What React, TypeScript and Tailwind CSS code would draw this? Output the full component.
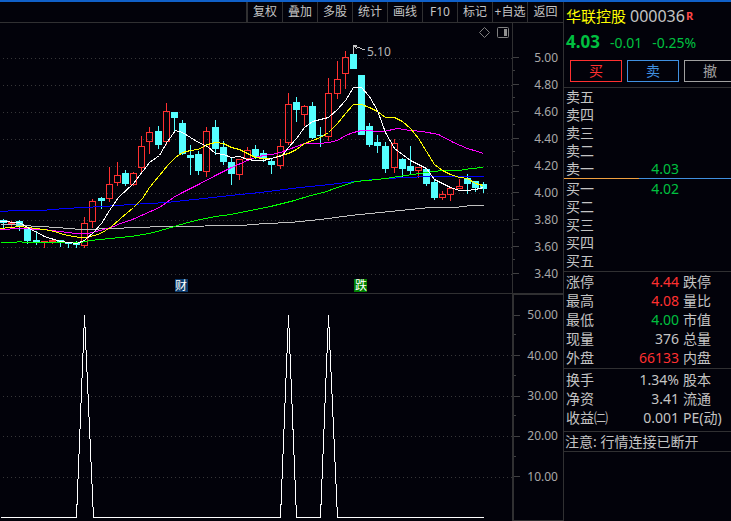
import React from "react";

type Candle = [up: 0 | 1, high: number, top: number, bottom: number, low: number];

const CANDLES: Candle[] = [
  [0, 219, 220, 223, 228], [1, 221, 222, 224, 227], [0, 220, 221, 226, 231], [0, 228, 229, 241, 244],
  [0, 231, 240, 242, 245], [1, 241, 241, 243, 248], [1, 238, 240, 242, 244], [0, 240, 240, 242, 247],
  [0, 242, 242, 244, 248], [0, 241, 243, 245, 248], [1, 217, 223, 246, 248], [1, 199, 201, 222, 228],
  [0, 197, 198, 201, 209], [1, 167, 184, 199, 202], [1, 162, 175, 183, 186], [0, 170, 173, 184, 186],
  [1, 172, 173, 185, 186], [1, 136, 146, 168, 172], [1, 127, 132, 142, 154], [0, 126, 131, 145, 149],
  [1, 103, 111, 142, 145], [0, 112, 112, 118, 131], [0, 120, 123, 154, 155], [0, 145, 155, 158, 175],
  [0, 151, 154, 171, 175], [1, 127, 131, 172, 177], [0, 120, 127, 149, 155], [0, 141, 147, 162, 165],
  [0, 158, 162, 174, 185], [1, 159, 159, 175, 180], [1, 147, 150, 159, 160], [0, 145, 149, 157, 159],
  [0, 150, 153, 159, 162], [0, 158, 161, 165, 174], [1, 139, 146, 166, 169], [1, 93, 104, 143, 145],
  [0, 97, 102, 110, 122], [1, 105, 106, 115, 126], [0, 102, 106, 138, 139], [0, 127, 135, 136, 147],
  [1, 78, 93, 137, 141], [1, 61, 79, 94, 99], [1, 51, 57, 74, 89], [0, 45, 54, 69, 69],
  [0, 75, 75, 135, 135], [0, 123, 126, 145, 147], [0, 135, 142, 146, 153], [0, 142, 146, 169, 173],
  [1, 139, 143, 168, 173], [0, 158, 159, 169, 177], [0, 146, 166, 171, 174], [1, 167, 167, 171, 178],
  [0, 169, 169, 184, 186], [0, 179, 182, 198, 200], [1, 191, 194, 198, 200], [1, 187, 188, 195, 201],
  [1, 179, 186, 189, 189], [0, 174, 178, 184, 194], [0, 181, 181, 188, 192], [0, 182, 184, 189, 193],
];

const AVERAGES = [
  {
    color: "#c0c0c0",
    points:
      "0,224 14,224 20,225 40,226 57,227 80,229 118,228 130,227 170,226 240,225 265,223 290,222 320,219 350,215 380,212 400,210 430,207 455,207 470,205 483,205",
  },
  {
    color: "#0000ff",
    points:
      "0,211 15,210 40,210 65,208 82,207 103,206 130,204 167,202 175,201 203,198 230,195 260,192 300,187 320,185 355,181 373,179 403,177 430,176 483,176",
  },
  {
    color: "#00ff00",
    points:
      "0,242 15,242 18,241 25,242 80,242 90,240 110,238 130,236 149,233 160,230 174,226 187,222 200,219 215,216 230,214 250,210 270,206 294,200 310,195 323,192 337,187 355,181 367,180 385,178 405,175 426,172 442,170 459,170 470,168 483,167",
  },
  {
    color: "#ff00ff",
    points:
      "0,229 19,228 43,229 60,231 75,233 87,233 100,230 113,226 120,223 132,219 159,207 173,197 182,192 198,184 215,175 231,167 247,160 255,157 263,155 271,154 280,152 296,146 304,143 320,143 328,142 337,140 345,135 353,132 361,130 383,131 397,128 410,130 422,131 438,134 453,142 467,148 477,151 483,153",
  },
  {
    color: "#ffff00",
    points:
      "0,228 19,226 36,228 50,230 67,235 80,237 87,237 100,233 110,227 120,218 133,207 142,198 149,187 159,175 167,165 175,157 182,152 190,150 198,149 207,144 215,142 223,143 231,147 239,149 247,153 255,157 263,158 271,158 280,155 288,153 296,149 304,143 312,140 320,137 328,132 337,123 345,113 353,104 361,104 369,107 377,111 385,117 394,117 402,121 410,128 418,138 426,151 434,164 442,170 450,174 459,177 467,178 475,183 483,185",
  },
  {
    color: "#ffffff",
    points:
      "0,221 19,222 27,227 44,236 60,241 76,243 84,240 93,232 101,223 109,210 118,197 133,183 149,162 159,155 167,141 175,130 182,132 198,142 207,146 215,153 223,154 231,157 239,156 247,159 255,160 263,160 271,158 282,155 288,147 296,138 304,127 312,121 320,119 328,117 337,109 345,100 353,87 361,87 369,96 377,110 385,132 394,148 402,154 410,160 418,164 426,168 434,179 442,183 450,187 459,190 467,190 475,189 483,187",
  },
];

const PRICE_TICKS = ["5.00", "4.80", "4.60", "4.40", "4.20", "4.00", "3.80", "3.60", "3.40"];
const SIGNAL_TICKS = ["50.00", "40.00", "30.00", "20.00", "10.00"];
const TOOLS = ["复权", "叠加", "多股", "统计", "画线", "F10", "标记", "+自选", "返回"];
const SELLS = [["卖五", ""], ["卖四", ""], ["卖三", ""], ["卖二", ""], ["卖一", "4.03"]];
const BUYS = [["买一", "4.02"], ["买二", ""], ["买三", ""], ["买四", ""], ["买五", ""]];
const RED = "text-[#ff3030]";
const GREEN = "text-[#00c040]";
const GREY = "text-[#c4c4c4]";
const QUOTES = [
  ["涨停", "4.44", RED, "跌停"],
  ["最高", "4.08", RED, "量比"],
  ["最低", "4.00", GREEN, "市值"],
  ["现量", "376", GREY, "总量"],
  ["外盘", "66133", RED, "内盘"],
];
const FUNDAMENTALS = [
  ["换手", "1.34%", GREY, "股本"],
  ["净资", "3.41", GREY, "流通"],
  ["收益㈡", "0.001", GREY, "PE(动)"],
];

function GridLine({ y }: { y: number }) {
  return <line x1="3" x2="512" y1={y + 0.5} y2={y + 0.5} stroke="#363638" strokeDasharray="1 3" />;
}

function PriceChart() {
  return (
    <svg
      className="block h-[270px] min-w-0 flex-1"
      viewBox="0 23 512 270"
      preserveAspectRatio="xMinYMin meet"
      shapeRendering="crispEdges"
      fill="none"
    >
      {PRICE_TICKS.map((t, i) => (
        <GridLine key={t} y={58 + i * 27} />
      ))}
      {CANDLES.map(([up, high, top, bottom, low], i) => {
        const x = Math.round(3 + i * 8.136);
        return up ? (
          <g key={i} stroke="#ff3030">
            {high < top && <line x1={x + 0.5} x2={x + 0.5} y1={high} y2={top} />}
            {low > bottom && <line x1={x + 0.5} x2={x + 0.5} y1={bottom} y2={low} />}
            <rect x={x - 2.5} y={top + 0.5} width="6" height={bottom - top - 1} />
          </g>
        ) : (
          <g key={i} fill="#54ffff">
            <rect x={x} y={high} width="1" height={low - high} />
            <rect x={x - 3} y={top} width="7" height={bottom - top} />
          </g>
        );
      })}
      <g transform="translate(0.5 0.5)">
        {AVERAGES.map((a) => (
          <polyline key={a.color} points={a.points} stroke={a.color} />
        ))}
      </g>
      <path d="M353.5 54V45.5M353 45.5L365 50M353.5 45.5H357M354 46L357 49" stroke="#c4c4c4" />
      <text x="367" y="56" fill="#b8b8b8" className="text-[12px]">
        5.10
      </text>
      <rect x="175" y="279" width="13" height="13" fill="#0a3a6c" />
      <text x="175" y="290" fill="#fff" className="text-[12px]">
        财
      </text>
      <rect x="354" y="279" width="13" height="13" fill="#008000" />
      <text x="355" y="290" fill="#fff" className="text-[12px]">
        跌
      </text>
      <g shapeRendering="auto" stroke="#808080">
        <path d="M484.5 27.5L489.5 32.5L484.5 37.5L479.5 32.5Z" />
        <rect x="497.5" y="27.5" width="11" height="10" rx="1" />
        <rect x="504" y="29" width="3" height="7" fill="#909090" stroke="none" />
      </g>
    </svg>
  );
}

function SignalChart() {
  return (
    <svg
      className="block h-[227px] min-w-0 flex-1"
      viewBox="0 294 512 227"
      preserveAspectRatio="xMinYMin meet"
      shapeRendering="crispEdges"
      fill="none"
    >
      {[355, 396, 436, 477].map((y) => (
        <GridLine key={y} y={y} />
      ))}
      <polyline
        transform="translate(0.5 0.5)"
        points="0,517 76,517 84,315 93,517 280,517 288,315 296,517 320,517 328,315 337,517 483,517"
        stroke="#fff"
      />
    </svg>
  );
}

function AxisRows({ ticks }: { ticks: string[] }) {
  return (
    <>
      {ticks.map((t, i) => (
        <div key={t} className="relative flex flex-1 items-center justify-between pr-[5px]">
          <span className="h-px w-1.5 bg-[#404042]" />
          <span className="leading-4">{t}</span>
          {i < ticks.length - 1 && <span className="absolute bottom-0 left-0 h-px w-0.5 bg-[#404042]" />}
        </div>
      ))}
    </>
  );
}

function OrderRows({ rows }: { rows: string[][] }) {
  return (
    <table className="w-full table-fixed leading-[18px]">
      <tbody>
        {rows.map(([name, price]) => (
          <tr key={name} className="h-[18px]">
            <th scope="row" className="w-[60px] pl-0.5 text-left font-normal">{name}</th>
            <td className="w-[55px] text-right text-[#00c040]">{price}</td>
            <td />
          </tr>
        ))}
      </tbody>
    </table>
  );
}

function QuoteRows({ rows }: { rows: string[][] }) {
  return (
    <table className="w-full table-fixed leading-[19px] whitespace-nowrap">
      <tbody>
        {rows.map(([name, value, color, next]) => (
          <tr key={name} className="h-[19px]">
            <th scope="row" className="w-[60px] pl-0.5 text-left font-normal">{name}</th>
            <td className={`w-[55px] text-right ${color}`}>{value}</td>
            <th scope="row" className="pl-1 text-left font-normal">{next}</th>
          </tr>
        ))}
      </tbody>
    </table>
  );
}

export default function App() {
  return (
    <div className="flex min-h-screen flex-col overflow-hidden border-t-2 border-[#1060c8] bg-[#02020a] font-['Noto_Sans','Noto_Sans_CJK_SC',sans-serif] text-[#c4c4c4]">
      <div className="flex flex-1">
        <main className="flex min-w-0 flex-1 flex-col text-[12px]">
          <nav className="flex h-[21px] justify-end border-b border-[#303032]">
            <div className="flex border-l-2 border-[#303032]">
              {TOOLS.map((t) => (
                <button
                  key={t}
                  type="button"
                  className="w-[35px] border-r border-[#303032] text-center leading-5 whitespace-nowrap last:border-r-0"
                >
                  {t}
                </button>
              ))}
            </div>
          </nav>
          <section className="flex border-b border-[#303032]">
            <PriceChart />
            <div className="flex w-[51px] flex-col border-l border-[#303032] pt-[21px] pb-1.5 text-[#a8a8a8]">
              <AxisRows ticks={PRICE_TICKS} />
            </div>
          </section>
          <section className="flex flex-1">
            <SignalChart />
            <div className="w-[51px] border-t border-b border-l-2 border-[#303032] text-[#a8a8a8]">
              <div className="flex h-[202px] flex-col">
                <AxisRows ticks={SIGNAL_TICKS} />
              </div>
            </div>
          </section>
        </main>

        <aside className="w-[168px] shrink-0 overflow-hidden border-l border-[#303032] text-[14px]">
          <header className="border-b border-[#303032] pb-[5px]">
            <h1 className="flex h-7 items-center gap-1 pl-0.5 whitespace-nowrap">
              <span className="text-[15px] text-[#ffff00]">华联控股</span>
              <span className="text-[16px]">
                000036
                <span className="pl-px align-[2px] text-[11px] leading-none font-bold text-[#ff4848]">R</span>
              </span>
            </h1>
            <p className="flex h-6 items-center gap-2.5 pl-0.5 text-[#00c040]">
              <strong className="text-[17px]">4.03</strong>
              <span>-0.01</span>
              <span>-0.25%</span>
            </p>
            <div className="flex gap-[5px] pt-1.5 pl-1.5">
              <button type="button" className="h-[22px] w-[52px] shrink-0 border border-[#ff3030] leading-5 text-[#ff3030]">买</button>
              <button type="button" className="h-[22px] w-[52px] shrink-0 border border-[#4090e0] leading-5 text-[#4090e0]">卖</button>
              <button type="button" className="h-[22px] w-[52px] shrink-0 border border-[#a0a0a0] leading-5 text-[#a0a0a0]">撤</button>
            </div>
          </header>
          <OrderRows rows={SELLS} />
          <div className="flex">
            <div className="h-px w-[45%] bg-[#f0a040]" />
            <div className="h-px flex-1 bg-[#4090e0]" />
          </div>
          <div className="border-b border-[#303032] py-px">
            <OrderRows rows={BUYS} />
          </div>
          <div className="border-b border-[#303032] pb-px">
            <QuoteRows rows={QUOTES} />
          </div>
          <div className="border-b border-[#303032] pt-px pb-1">
            <QuoteRows rows={FUNDAMENTALS} />
          </div>
          <p className="border-b border-[#303032] pl-px leading-[19px] whitespace-nowrap">注意: 行情连接已断开</p>
        </aside>
      </div>
    </div>
  );
}
